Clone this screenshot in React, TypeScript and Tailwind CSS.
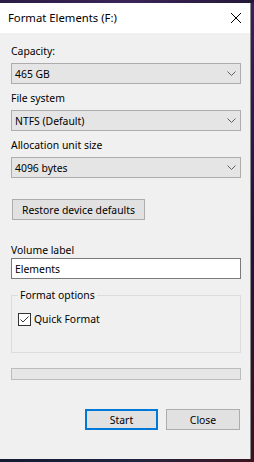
import React from "react";

function Chevron() {
  return (
    <svg width="9" height="5" viewBox="0 0 9 5" className="block">
      <path d="M0.5 0.5 L4.5 4.5 L8.5 0.5" fill="none" stroke="#606060" strokeWidth="1" />
    </svg>
  );
}

function Label({ children, className = "" }: { children: React.ReactNode; className?: string }) {
  return <div className={`h-4 leading-4 text-[10.4px] text-black ${className}`}>{children}</div>;
}

function Combo({ value, className = "" }: { value: string; className?: string }) {
  return (
    <div
      className={`h-[21px] w-[230px] border border-[#adadad] bg-[#e5e5e5] flex items-center justify-between pl-[3px] pr-[4px] text-[10.4px] text-black ${className}`}
    >
      <span className="leading-4">{value}</span>
      <Chevron />
    </div>
  );
}

export default function App() {
  return (
    <div className="w-[254px] h-[462px] bg-[#1b1530] flex flex-col overflow-hidden font-['Noto_Sans',sans-serif]">
      <div className="h-[3px] bg-gradient-to-r from-[#2a1d44] via-[#3b2558] to-[#241838]" />
      <div className="flex flex-1 min-h-0">
        <div className="w-[251px] flex flex-col border-r border-[#8c8c8c]">
          <div className="h-[30px] bg-white flex items-center justify-between pl-[8px] pr-[9px]">
            <span className="text-[11.3px] leading-4 text-black">Format Elements (F:)</span>
            <svg width="10" height="10" viewBox="0 0 10 10" className="block">
              <path d="M0 0 L10 10 M10 0 L0 10" stroke="#000" strokeWidth="1" />
            </svg>
          </div>
          <div className="flex-1 bg-[#f0f0f0] pl-[11px] pt-[10px] flex flex-col">
            <Label>Capacity:</Label>
            <Combo value="465 GB" className="mt-[4px]" />
            <Label className="mt-[6px]">File system</Label>
            <Combo value="NTFS (Default)" className="mt-[4px]" />
            <Label className="mt-[6px]">Allocation unit size</Label>
            <Combo value="4096 bytes" className="mt-[4px]" />
            <div className="mt-[21px] ml-[1px] h-[21px] w-[133px] border border-[#adadad] bg-[#e1e1e1] flex items-center justify-center text-[10.4px] leading-4 text-black">
              Restore device defaults
            </div>
            <Label className="mt-[22px]">Volume label</Label>
            <div className="h-[21px] w-[230px] border border-[#7a7a7a] bg-white flex items-center pl-[3px] text-[10.4px] leading-4 text-black">
              Elements
            </div>
            <fieldset className="mt-[8px] h-[66px] w-[230px] border border-[#dcdcdc] px-[6px] m-0">
              <legend className="px-[2px] text-[10.4px] leading-4 text-black">Format options</legend>
              <div className="mt-[8px] flex items-center gap-[3px]">
                <div className="w-[13px] h-[13px] border border-[#333333] bg-white flex items-center justify-center">
                  <svg width="11" height="11" viewBox="0 0 11 11" className="block">
                    <path d="M1.5 5.5 L4 8 L9.5 2.5" fill="none" stroke="#333333" strokeWidth="1" />
                  </svg>
                </div>
                <span className="text-[10.4px] leading-4 text-black">Quick Format</span>
              </div>
            </fieldset>
            <div className="mt-[15px] h-[12px] w-[230px] border border-[#bcbcbc] bg-[#e6e6e6]" />
            <div className="mt-[29px] flex justify-end gap-[8px] pr-[10px]">
              <div className="h-[21px] w-[73px] border-2 border-[#0078d7] bg-[#e1e1e1] flex items-center justify-center text-[10.4px] leading-4 text-black">
                Start
              </div>
              <div className="h-[21px] w-[74px] border border-[#adadad] bg-[#e1e1e1] flex items-center justify-center text-[10.4px] leading-4 text-black">
                Close
              </div>
            </div>
          </div>
        </div>
        <div className="flex-1 bg-gradient-to-b from-[#3a1f5c] via-[#22123a] to-[#3a1020]" />
      </div>
      <div className="h-[3px] bg-gradient-to-r from-[#141a30] via-[#1e2440] to-[#3a1420]" />
    </div>
  );
}
